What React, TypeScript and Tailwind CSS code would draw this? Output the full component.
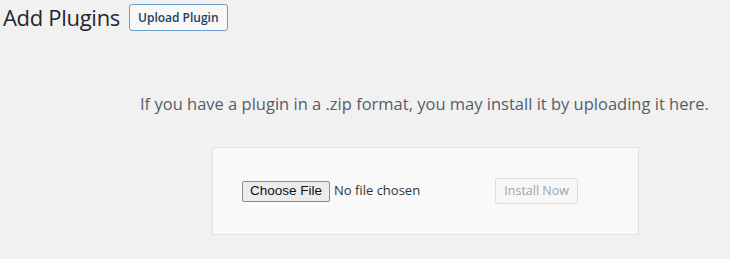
import React from 'react';

export default function App() {
  return (
    <div className="w-[730px] h-[259px] bg-[#f1f1f1] overflow-hidden font-['Open_Sans','Noto_Sans',sans-serif]">
      {/* Header */}
      <div className="flex items-center pl-[3px] pt-[4px] gap-[9px]">
        <h1 className="text-[22px] leading-[27px] tracking-[-0.3px] text-[#23282d] font-normal">Add Plugins</h1>
        <button className="h-[27px] px-[8px] border border-[#6a9fcc] rounded-[3px] bg-[#f7f7f7] text-[12px] font-semibold text-[#1f3f5e]">
          Upload Plugin
        </button>
      </div>

      {/* Upload section */}
      <p className="mt-[61px] pl-[140px] text-[16.5px] leading-[24px] text-[#555d66] whitespace-nowrap">
        If you have a plugin in a .zip format, you may install it by uploading it here.
      </p>

      <div className="mt-[31px] ml-[212px] w-[427px] h-[88px] bg-[#f9f9f9] border border-[#e2e2e2] flex items-center pl-[29px]">
        <div className="flex items-center text-[13.5px] font-['Liberation_Sans',sans-serif] text-[#222]">
          <span className="h-[21px] px-[7px] flex items-center bg-[#ececec] border border-[#8a8a8a] rounded-[2px] text-[#111]">
            Choose File
          </span>
          <span className="ml-[4px] font-['Open_Sans','Noto_Sans',sans-serif] text-[13px] text-[#333]">No file chosen</span>
        </div>
        <button className="ml-[75px] h-[26px] w-[83px] border border-[#ddd] rounded-[3px] bg-[#f7f7f7] text-[12.5px] text-[#a0a5aa]">
          Install Now
        </button>
      </div>
    </div>
  );
}
